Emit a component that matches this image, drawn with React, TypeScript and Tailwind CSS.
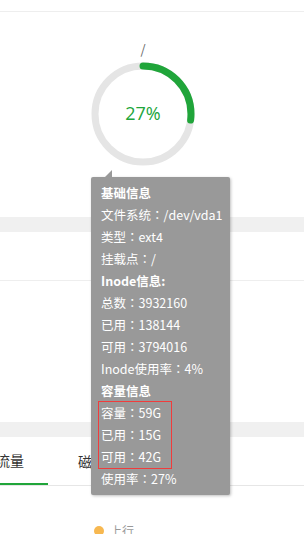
import React from "react";

const font = { fontFamily: '"Noto Sans CJK SC", "Noto Sans", sans-serif' };
const jp = { fontFamily: '"Noto Sans CJK JP", sans-serif' };

function Row({ k, v, bold }: { k: string; v?: string; bold?: boolean }) {
  return (
    <div className={"h-[22px] leading-[22px] whitespace-nowrap" + (bold ? " font-bold" : "")}>
      {k}
      {v !== undefined && (
        <>
          <span style={jp}>：</span>
          {v}
        </>
      )}
    </div>
  );
}

function Tip() {
  return (
    <div
      className="absolute left-[91px] top-[177px] w-[139px] bg-[#999999] text-white text-[12.5px] pl-[10px] pt-[5px] pb-[5px] rounded-[2px] shadow-[1px_1px_3px_rgba(0,0,0,0.25)]"
      style={font}
    >
      <div className="absolute left-[14px] -top-[7px] w-0 h-0 border-r-[7px] border-r-[#999999] border-t-[7px] border-t-transparent" />
      <Row k="基础信息" bold />
      <Row k="文件系统" v="/dev/vda1" />
      <Row k="类型" v="ext4" />
      <Row k="挂载点" v="/" />
      <Row k="Inode信息:" bold />
      <Row k="总数" v="3932160" />
      <Row k="已用" v="138144" />
      <Row k="可用" v="3794016" />
      <Row k="Inode使用率" v="4%" />
      <Row k="容量信息" bold />
      <div className="-ml-[2px] pl-[2px] w-[72px] outline outline-1 outline-[#f03c3c]">
        <Row k="容量" v="59G" />
        <Row k="已用" v="15G" />
        <Row k="可用" v="42G" />
      </div>
      <Row k="使用率" v="27%" />
    </div>
  );
}

export default function App() {
  const r = 48;
  const c = 2 * Math.PI * r;
  return (
    <div className="relative w-[304px] h-[534px] overflow-hidden bg-white" style={font}>
      <div className="h-[12px] border-b border-[#eeeeee]" />
      <div className="h-[205px] pt-[27px] pl-[88px]">
        <div className="w-[110px] flex flex-col items-center">
          <div className="h-5 leading-5 text-[13px] text-[#666666]">/</div>
          <div className="relative w-[110px] h-[110px] flex items-center justify-center">
            <svg className="absolute inset-0" width="110" height="110" viewBox="0 0 110 110">
              <circle cx="55" cy="55" r={r} fill="none" stroke="#e5e5e5" strokeWidth="7" />
              <circle
                cx="55"
                cy="55"
                r={r}
                fill="none"
                stroke="#20a53a"
                strokeWidth="7"
                strokeLinecap="round"
                strokeDasharray={`${c * 0.27} ${c}`}
                transform="rotate(-90 55 55)"
              />
            </svg>
            <span className="relative text-[18px] text-[#20a53a] -mt-[2px]" style={{ fontFamily: '"Open Sans", sans-serif' }}>27%</span>
          </div>
        </div>
      </div>
      <div className="h-[15px] bg-[#f0f0f0]" />
      <div className="h-[190px]">
        <div className="h-[49px] border-b border-[#eeeeee]" />
      </div>
      <div className="h-[15px] bg-[#f0f0f0]" />
      <div className="flex h-[49px] border-b border-[#e6e6e6]">
        <div className="w-[48px] h-[48px] border-b-2 border-[#20a53a] flex items-center">
          <span className="-ml-[4px] text-[14px] text-[#333333] whitespace-nowrap">流量</span>
        </div>
        <div className="h-[48px] flex items-center pl-[30px]">
          <span className="text-[14px] text-[#333333] whitespace-nowrap">磁盘IO</span>
        </div>
      </div>
      <div className="flex items-center pl-[94px] pt-[39px]">
        <span className="w-[10px] h-[10px] rounded-full bg-[#f7b851]" />
        <span className="ml-[6px] text-[12px] text-[#999999] leading-[12px]">上行</span>
      </div>
      <Tip />
    </div>
  );
}
